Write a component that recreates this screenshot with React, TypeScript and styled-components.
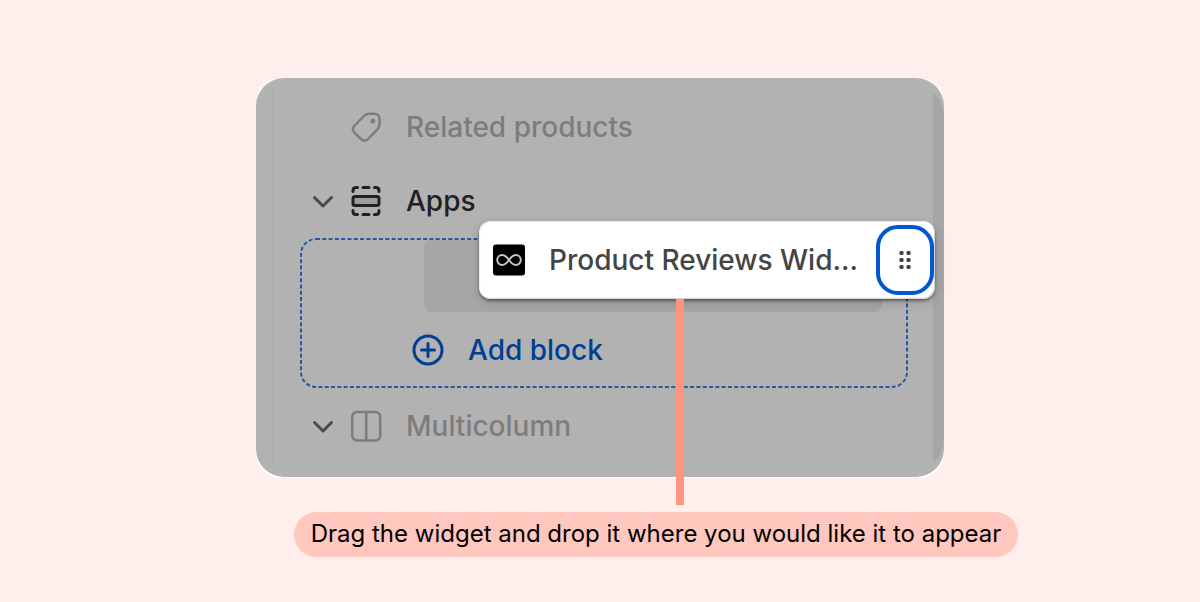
import React from 'react';
import styled, { createGlobalStyle } from 'styled-components';

const GlobalStyle = createGlobalStyle`
  *, *::before, *::after { box-sizing: border-box; }
  body {
    margin: 0;
    background: #ffefec;
    font-family: Inter, "Liberation Sans", sans-serif;
  }
`;

const Figure = styled.figure`
  margin: 0;
  min-height: 100vh;
  padding: 78px 0 45px;
  display: flex;
  flex-direction: column;
  align-items: center;
`;

const Panel = styled.section`
  position: relative;
  isolation: isolate;
  width: 100%;
  max-width: 688px;
  padding: 12px 0 14px;
  border-radius: 28px;
  background: #b2b2b2;

  &::before {
    content: '';
    position: absolute;
    z-index: -2;
    inset: 0 0 -1px;
    border-radius: 25px;
    background: #fff;
  }

  &::after {
    content: '';
    position: absolute;
    z-index: -1;
    inset: 0;
    border-radius: 28px;
    background: #b2b2b2;
  }
`;

const Divider = styled.div`
  position: absolute;
  top: 10px;
  bottom: 10px;
  left: 16px;
  width: 2px;
  background: #adadad;
`;

const ScrollTrack = styled.div`
  position: absolute;
  top: 16px;
  bottom: 16px;
  right: 0;
  width: 11px;
  border-radius: 0 11px 11px 0 / 0 28px 28px 0;
  background: #a6a6a6;
`;

const SectionRow = styled.div<{ $muted?: boolean }>`
  display: grid;
  grid-template-columns: 22px 32px 1fr;
  column-gap: 16px;
  align-items: center;
  height: 74px;
  padding-left: 56px;
  color: ${(p) => (p.$muted ? '#7d7d7d' : '#212121')};
`;

const Toggle = styled.button`
  display: flex;
  padding: 0;
  border: 0;
  background: none;
  color: #4a4a4a;
`;

const Label = styled.span`
  padding-left: 8px;
  font-size: 28px;
  font-weight: 500;
  line-height: 36px;
  white-space: nowrap;
`;

const DropZone = styled.div`
  position: relative;
  height: 150px;
  margin: 0 36px 1px 44px;
  padding: 2px 26px 2px 112px;
`;

const DashedOutline = styled.svg`
  position: absolute;
  inset: 0;
  width: 100%;
  height: 100%;
  pointer-events: none;
`;

const Placeholder = styled.div`
  height: 72px;
  margin-left: 12px;
  border-radius: 8px;
  background: #a6a6a6;
`;

const AddButton = styled.button`
  display: flex;
  align-items: center;
  gap: 16px;
  height: 75px;
  padding: 0;
  border: 0;
  background: none;
  color: #003f93;
  font-family: inherit;
`;

const DragCard = styled.div`
  position: absolute;
  top: -17px;
  left: 179px;
  right: -27px;
  height: 78px;
  display: flex;
  align-items: center;
  padding: 0 1px 0 14px;
  border-radius: 12px;
  background: #fff;
  box-shadow: inset -1px -1px 1px #d0d0d0, inset 1px 1px 1px #ececec,
    0 2px 3px rgba(0, 0, 0, 0.4), 0 4px 12px rgba(0, 0, 0, 0.14);
  color: #444;
`;

const CardLabel = styled(Label)`
  flex: 1;
  padding-left: 24px;
`;

const DragHandle = styled.button`
  display: flex;
  align-items: center;
  justify-content: center;
  width: 58px;
  height: 70px;
  padding: 0;
  border: 4px solid #0057d0;
  border-radius: 22px;
  background: #fff;
  color: #444;
`;

const Connector = styled.div`
  position: absolute;
  top: 100%;
  left: 197px;
  width: 8px;
  height: 206px;
  background: #ff9380;
`;

const Caption = styled.figcaption`
  margin: 35px 0 0 112px;
  padding: 6px 17px 7px;
  border-radius: 23px;
  background: #ffc7be;
  color: #000;
  font-size: 24px;
  line-height: 32px;
`;

const Chevron = () => (
  <svg width="22" height="22" viewBox="0 0 22 22" fill="none" stroke="currentColor" strokeWidth="3" strokeLinecap="round" strokeLinejoin="round">
    <path d="M2.5 7.5 11 16 19.5 7.5" />
  </svg>
);

const TagIcon = () => (
  <svg width="32" height="32" viewBox="0 0 32 32" fill="none" stroke="currentColor" strokeWidth="2.5" strokeLinejoin="round">
    <path d="M19 2.8H24Q29.6 2.8 29.6 8.5V13Q29.6 16 27.5 18.3L18 28Q14.5 31.2 11 28L4.2 21.3Q1.6 18.2 4.2 15L14 5Q16.2 2.8 19 2.8Z" />
    <circle cx="22.8" cy="10.2" r="2.4" fill="currentColor" stroke="none" />
  </svg>
);

const AppsIcon = () => (
  <svg width="32" height="32" viewBox="0 0 32 32" fill="none" stroke="currentColor" strokeWidth="3" strokeLinecap="round" strokeLinejoin="round">
    <rect x="3" y="11.5" width="26" height="9" rx="2" fill="currentColor" fillOpacity="0.15" />
    <path d="M3 6.5V5.5Q3 2.5 6 2.5H7.5M13 2.5H19M24.5 2.5H26Q29 2.5 29 5.5V6.5" />
    <path d="M3 25.5V26.5Q3 29.5 6 29.5H7.5M13 29.5H19M24.5 29.5H26Q29 29.5 29 26.5V25.5" />
  </svg>
);

const ColumnsIcon = () => (
  <svg width="32" height="32" viewBox="0 0 32 32" fill="none" stroke="currentColor" strokeWidth="2.6">
    <rect x="2.2" y="2" width="28" height="28.5" rx="5" />
    <path d="M16.2 2V30.5" />
  </svg>
);

const PlusCircleIcon = () => (
  <svg width="32" height="32" viewBox="0 0 32 32" fill="none" stroke="currentColor" strokeWidth="3" strokeLinecap="round">
    <circle cx="16" cy="16" r="14" />
    <path d="M16 9.5V22.5M9.5 16H22.5" />
  </svg>
);

const AppLogo = () => (
  <svg width="32" height="32" viewBox="0 0 32 32" fill="none">
    <rect y="0.5" width="32" height="31" rx="3" fill="#000" />
    <path
      d="M16 16C13.6 12.6 11.8 11 9.2 11A5 5 0 0 0 9.2 21C11.8 21 13.6 19.4 16 16C18.4 12.6 20.2 11 22.8 11A5 5 0 0 1 22.8 21C20.2 21 18.4 19.4 16 16Z"
      stroke="#c4c4c4"
      strokeWidth="2"
    />
  </svg>
);

const GripIcon = () => (
  <svg width="14" height="20" viewBox="0 0 14 20" fill="currentColor">
    {[3, 10, 17].map((y) => (
      <React.Fragment key={y}>
        <rect x="1.5" y={y - 2} width="4" height="4" rx="1.2" />
        <rect x="8.5" y={y - 2} width="4" height="4" rx="1.2" />
      </React.Fragment>
    ))}
  </svg>
);

export default function App() {
  return (
    <>
      <GlobalStyle />
      <Figure>
        <Panel>
          <Divider />
          <ScrollTrack />
          <SectionRow $muted>
            <span />
            <TagIcon />
            <Label>Related products</Label>
          </SectionRow>
          <SectionRow>
            <Toggle aria-label="Collapse Apps"><Chevron /></Toggle>
            <AppsIcon />
            <Label>Apps</Label>
          </SectionRow>
          <DropZone>
            <Placeholder />
            <DashedOutline>
              <rect
                x="1"
                y="1"
                rx="15"
                fill="none"
                stroke="#2858a0"
                strokeWidth="2"
                strokeDasharray="4 2.3"
                style={{ width: 'calc(100% - 2px)', height: 'calc(100% - 2px)' }}
              />
            </DashedOutline>
            <AddButton>
              <PlusCircleIcon />
              <Label>Add block</Label>
            </AddButton>
            <DragCard>
              <AppLogo />
              <CardLabel>Product Reviews Wid...</CardLabel>
              <DragHandle aria-label="Drag Product Reviews Widget"><GripIcon /></DragHandle>
              <Connector />
            </DragCard>
          </DropZone>
          <SectionRow $muted>
            <Toggle aria-label="Collapse Multicolumn"><Chevron /></Toggle>
            <ColumnsIcon />
            <Label>Multicolumn</Label>
          </SectionRow>
        </Panel>
        <Caption>Drag the widget and drop it where you would like it to appear</Caption>
      </Figure>
    </>
  );
}
